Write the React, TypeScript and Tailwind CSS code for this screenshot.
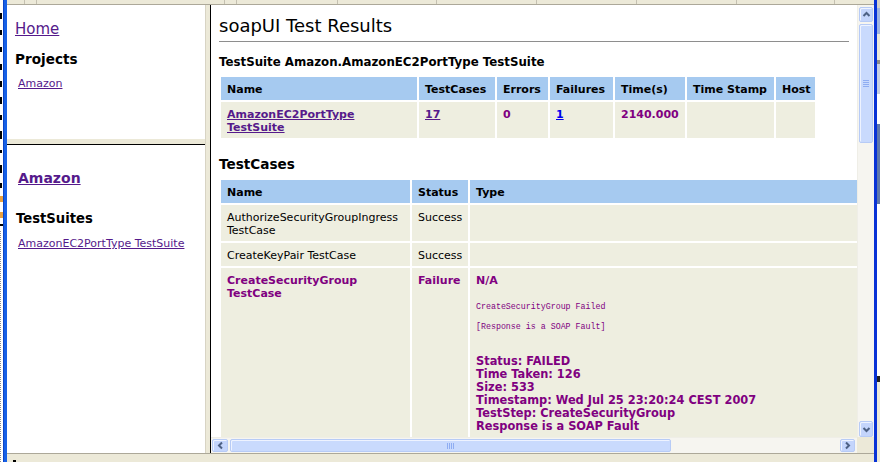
import React from "react";

type Dir = "up" | "down" | "left" | "right";

const ARROWS: Record<Dir, string> = {
  up: "M1.5 6 L4.5 3 L7.5 6",
  down: "M1.5 3 L4.5 6 L7.5 3",
  left: "M6 1.5 L3 4.5 L6 7.5",
  right: "M3 1.5 L6 4.5 L3 7.5",
};

const TOP_SEGMENTS = [
  "w-[18px]",
  "w-[12px]",
  "w-[188px]",
  "w-[12px]",
  "w-[101px]",
  "w-[99px]",
  "w-[100px]",
  "w-[100px]",
  "w-[100px]",
  "w-[98px]",
];

// fragments of letters from the window behind
const EDGE_MARKS = ["h-[6px]", "h-[5px]", "h-[5px]", "h-[6px]", "h-[6px]", "h-[7px]", "h-[5px]", "h-[8px]", "h-[3px]", "h-[8px]", "h-[5px]"];

const LINK = "text-[#551a8b] underline";
const PURPLE = "text-[#800080] font-bold";

const ScrollButton = ({ dir, className }: { dir: Dir; className: string }) => (
  <div
    className={`flex items-center justify-center rounded-[2px] border border-[#b7cbf6] bg-[#c4d5fc] shadow-[inset_1px_1px_0_#eef3ff] ${className}`}
  >
    <svg width="9" height="9" viewBox="0 0 9 9">
      <path d={ARROWS[dir]} fill="none" stroke="#4d6185" strokeWidth="2" />
    </svg>
  </div>
);

const LeftEdge = () => (
  <div className="flex w-[3px] flex-col overflow-hidden bg-white">
    <div className="flex flex-col pt-[7px]">
      {EDGE_MARKS.map((h, i) => (
        <div key={i} className="flex h-[17px] items-center">
          <div className={`w-[2px] bg-black ${h}`} />
        </div>
      ))}
    </div>
    <div className="mt-[2px] h-[6px] bg-[#e8a040]" />
    <div className="mt-[10px] h-[6px] bg-[#e8a040]" />
    <div className="mt-[6px] h-[2px] bg-black" />
    <div className="mt-[5px] flex-1 border-l border-dotted border-[#8c8c8c]" />
  </div>
);

const RightEdge = () => (
  <div className="flex w-[3px] flex-col">
    <div className="h-[8px] bg-[#d4d0c8]" />
    <div className="h-[26px] bg-[#9fb4e0]" />
    <div className="h-[26px] bg-[#ece9d8]" />
    <div className="h-[4px] bg-[#8a8a8a]" />
    <div className="h-[30px] bg-[#c6cfe2]" />
    <div className="h-[30px] bg-white" />
    <div className="h-[80px] bg-[#5f78aa]" />
    <div className="h-[172px] bg-white" />
    <div className="h-[6px] bg-[#222]" />
    <div className="flex-1 bg-[#ece9d8]" />
  </div>
);

const Th = ({ children }: { children: React.ReactNode }) => (
  <th className="overflow-hidden whitespace-nowrap bg-[#a6caf0] pb-[4px] pl-[6px] pr-[2px] pt-[6px] text-left align-top font-bold">
    {children}
  </th>
);

const Td = ({ children, className = "" }: { children?: React.ReactNode; className?: string }) => (
  <td className={`bg-[#eeeee0] pb-[4px] pl-[6px] pr-[2px] pt-[6px] text-left align-top ${className}`}>
    {children}
  </td>
);

const App = () => {
  return (
    <div className="flex h-[462px] w-[880px] overflow-hidden bg-white font-['DejaVu_Sans',sans-serif] text-black">
      <LeftEdge />
      <div className="w-[4px] border-l border-[#0a45c8] bg-[#1660e6]" />
      <div className="flex w-[867px] flex-col">
        {/* toolbar remains */}
        <div className="flex h-[5px] border-b border-[#aca899] bg-[#ece9d8]">
          {TOP_SEGMENTS.map((w, i) => (
            <div key={i} className={`h-full border-r border-[#c4c0b0] ${w}`} />
          ))}
        </div>

        <div className="flex h-[448px]">
          {/* left frames */}
          <div className="flex w-[203px]">
            <div className="flex w-[198px] flex-col">
              <div className="h-[134px] bg-white pl-[8px] pt-[15px]">
                <a className={`block text-[15px] leading-[18px] ${LINK}`}>Home</a>
                <h2 className="mt-[13px] text-[13.6px] font-bold leading-[16px]">Projects</h2>
                <a className={`mt-[10px] block pl-[3px] text-[11px] leading-[13px] ${LINK}`}>Amazon</a>
              </div>
              <div className="h-[6px] border-b border-black bg-[#ece9d8]" />
              <div className="flex-1 bg-white pl-[9px] pt-[25px]">
                <a className={`block pl-[2px] text-[14px] font-bold leading-[17px] ${LINK}`}>Amazon</a>
                <h2 className="mt-[24px] text-[13.2px] font-bold leading-[16px]">TestSuites</h2>
                <a className={`mt-[10px] block pl-[2px] text-[11px] leading-[13px] ${LINK}`}>
                  AmazonEC2PortType TestSuite
                </a>
              </div>
            </div>
            <div className="w-[5px] border-l border-[#d8d4c4] bg-[#ece9d8]" />
          </div>

          {/* right frame */}
          <div className="flex w-[664px] flex-col border-l border-black">
            <div className="flex h-[432px]">
              <div className="w-[646px] overflow-hidden bg-white pl-[8px] pt-[10px] text-[11px] leading-[13px]">
                <h1 className="text-[18px] leading-[21px]">soapUI Test Results</h1>
                <div className="mt-[5px] h-[2px] w-[630px] border-t border-[#8e8e8e] border-b-[#e4e4e4]" />
                <h2 className="mt-[11px] text-[11.8px] font-bold leading-[16px]">
                  TestSuite Amazon.AmazonEC2PortType TestSuite
                </h2>
                <table className="mt-[5px] w-[598px] table-fixed border-separate border-spacing-[2px]">
                  <colgroup>
                    <col className="w-[196px]" />
                    <col className="w-[76px]" />
                    <col className="w-[51px]" />
                    <col className="w-[63px]" />
                    <col className="w-[70px]" />
                    <col className="w-[87px]" />
                    <col className="w-[39px]" />
                  </colgroup>
                  <thead>
                    <tr>
                      <Th>Name</Th>
                      <Th>TestCases</Th>
                      <Th>Errors</Th>
                      <Th>Failures</Th>
                      <Th>Time(s)</Th>
                      <Th>Time Stamp</Th>
                      <Th>Host</Th>
                    </tr>
                  </thead>
                  <tbody>
                    <tr className={PURPLE}>
                      <Td className="pb-[3px]">
                        <a className={LINK}>
                          AmazonEC2PortType
                          <br />
                          TestSuite
                        </a>
                      </Td>
                      <Td>
                        <a className={LINK}>17</a>
                      </Td>
                      <Td>0</Td>
                      <Td>
                        <a className="text-[#0000ee] underline">1</a>
                      </Td>
                      <Td>2140.000</Td>
                      <Td />
                      <Td />
                    </tr>
                  </tbody>
                </table>

                <h2 className="mt-[16px] text-[13.6px] font-bold leading-[16px]">TestCases</h2>
                <table className="mt-[6px] w-[673px] table-fixed border-separate border-spacing-[2px]">
                  <colgroup>
                    <col className="w-[189px]" />
                    <col className="w-[56px]" />
                    <col className="w-[420px]" />
                  </colgroup>
                  <thead>
                    <tr>
                      <Th>Name</Th>
                      <Th>Status</Th>
                      <Th>Type</Th>
                    </tr>
                  </thead>
                  <tbody>
                    <tr>
                      <Td>
                        AuthorizeSecurityGroupIngress
                        <br />
                        TestCase
                      </Td>
                      <Td>Success</Td>
                      <Td />
                    </tr>
                    <tr>
                      <Td>CreateKeyPair TestCase</Td>
                      <Td>Success</Td>
                      <Td />
                    </tr>
                    <tr className={PURPLE}>
                      <Td className="pb-[12px]">
                        CreateSecurityGroup
                        <br />
                        TestCase
                      </Td>
                      <Td>Failure</Td>
                      <Td className="pb-[12px]">
                        <div>N/A</div>
                        <div className="mt-[15px] font-['Liberation_Mono',monospace] text-[8.3px] font-normal leading-[10px]">
                          CreateSecurityGroup Failed
                        </div>
                        <div className="mt-[10px] font-['Liberation_Mono',monospace] text-[8.3px] font-normal leading-[10px]">
                          [Response is a SOAP Fault]
                        </div>
                        <div className="mt-[23px] text-[11.4px]">
                          <div>Status: FAILED</div>
                          <div>Time Taken: 126</div>
                          <div>Size: 533</div>
                          <div>Timestamp: Wed Jul 25 23:20:24 CEST 2007</div>
                          <div>TestStep: CreateSecurityGroup</div>
                          <div>Response is a SOAP Fault</div>
                        </div>
                      </Td>
                    </tr>
                  </tbody>
                </table>
              </div>

              {/* vertical scrollbar */}
              <div className="flex w-[17px] flex-col border-l border-[#efeee7] bg-[#f6f5f0] px-[1px] pt-[2px]">
                <ScrollButton dir="up" className="h-[15px]" />
                <div className="mt-[2px] flex h-[119px] flex-col items-center justify-center gap-[1px] rounded-[2px] border border-[#b7cbf6] bg-[#c9dafd] shadow-[inset_1px_1px_0_#eef3ff]">
                  {[0, 1, 2, 3].map((i) => (
                    <div key={i} className="h-[1px] w-[6px] bg-[#8fadf2]" />
                  ))}
                </div>
                <div className="flex-1" />
                <ScrollButton dir="down" className="h-[16px]" />
              </div>
            </div>

            {/* horizontal scrollbar */}
            <div className="flex h-[16px]">
              <div className="flex w-[646px] border-t border-[#efeee7] bg-[#f6f5f0] pb-[1px] pl-[1px] pr-[2px] pt-[1px]">
                <ScrollButton dir="left" className="w-[16px]" />
                <div className="ml-[2px] flex w-[441px] items-center justify-center gap-[1px] rounded-[2px] border border-[#b7cbf6] bg-[#c9dafd] shadow-[inset_1px_1px_0_#eef3ff]">
                  {[0, 1, 2, 3].map((i) => (
                    <div key={i} className="h-[6px] w-[1px] bg-[#8fadf2]" />
                  ))}
                </div>
                <div className="flex-1" />
                <ScrollButton dir="right" className="w-[15px]" />
              </div>
              <div className="w-[17px] bg-[#ece9d8]" />
            </div>
          </div>
        </div>

        {/* status bar */}
        <div className="flex h-[9px] items-end border-t border-[#aca899] bg-[#ece9d8] pl-[6px]">
          <div className="h-[2px] w-[3px] bg-black" />
        </div>
      </div>
      <div className="w-[3px] bg-[#0832d6]" />
      <RightEdge />
    </div>
  );
};

export default App;
